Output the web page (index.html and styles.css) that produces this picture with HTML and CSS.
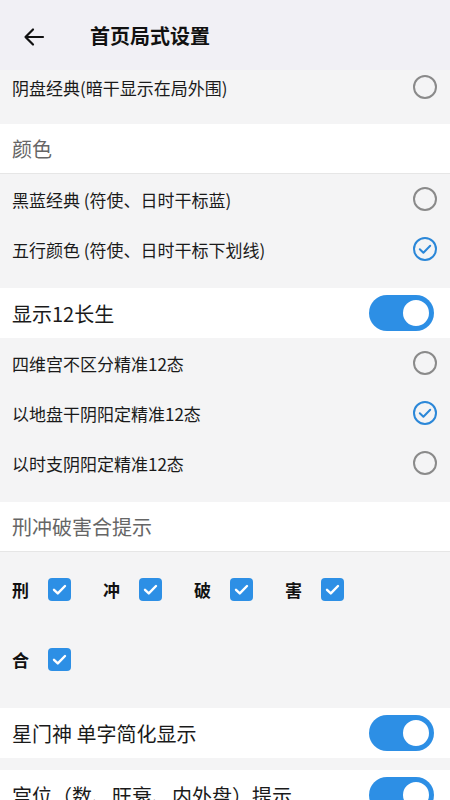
FILE: index.html
```html
<!DOCTYPE html>
<html lang="zh-CN">
<head>
    <meta charset="UTF-8">
    <meta name="viewport" content="width=device-width, initial-scale=1.0">
    <title>首页局式设置</title>
    <link rel="stylesheet" href="styles.css">
</head>
<body>
    <div class="header">
        <svg class="back" width="24" height="24" viewBox="0 0 24 24">
            <path d="M21 12H3.5M11 4.5L3.5 12L11 19.5" fill="none" stroke="#111" stroke-width="2.2" stroke-linecap="round" stroke-linejoin="round"/>
        </svg>
        <div class="title">首页局式设置</div>
    </div>

    <div class="group first">
        <div class="option">
            <span>阴盘经典(暗干显示在局外围)</span>
            <span class="radio"></span>
        </div>
    </div>

    <div class="section-title">颜色</div>
    <div class="group">
        <div class="option">
            <span>黑蓝经典 (符使、日时干标蓝)</span>
            <span class="radio"></span>
        </div>
        <div class="option">
            <span>五行颜色 (符使、日时干标下划线)</span>
            <span class="radio checked"><svg width="24" height="24" viewBox="0 0 24 24"><path d="M6.8 12.3L10.4 15.8L17.2 8.8" fill="none" stroke="#2b87d8" stroke-width="2" stroke-linecap="round" stroke-linejoin="round"/></svg></span>
        </div>
    </div>

    <div class="switch-row">
        <span>显示12长生</span>
        <span class="switch on"><span class="knob"></span></span>
    </div>
    <div class="group">
        <div class="option">
            <span>四维宫不区分精准12态</span>
            <span class="radio"></span>
        </div>
        <div class="option">
            <span>以地盘干阴阳定精准12态</span>
            <span class="radio checked"><svg width="24" height="24" viewBox="0 0 24 24"><path d="M6.8 12.3L10.4 15.8L17.2 8.8" fill="none" stroke="#2b87d8" stroke-width="2" stroke-linecap="round" stroke-linejoin="round"/></svg></span>
        </div>
        <div class="option">
            <span>以时支阴阳定精准12态</span>
            <span class="radio"></span>
        </div>
    </div>

    <div class="section-title">刑冲破害合提示</div>
    <div class="group checks">
        <div class="check-row">
            <div class="check-item"><span>刑</span><span class="box"><svg width="23" height="23" viewBox="0 0 23 23"><path d="M6 11.8L9.8 15.4L17 8" fill="none" stroke="#fff" stroke-width="2.4" stroke-linecap="round" stroke-linejoin="round"/></svg></span></div>
            <div class="check-item"><span>冲</span><span class="box"><svg width="23" height="23" viewBox="0 0 23 23"><path d="M6 11.8L9.8 15.4L17 8" fill="none" stroke="#fff" stroke-width="2.4" stroke-linecap="round" stroke-linejoin="round"/></svg></span></div>
            <div class="check-item"><span>破</span><span class="box"><svg width="23" height="23" viewBox="0 0 23 23"><path d="M6 11.8L9.8 15.4L17 8" fill="none" stroke="#fff" stroke-width="2.4" stroke-linecap="round" stroke-linejoin="round"/></svg></span></div>
            <div class="check-item"><span>害</span><span class="box"><svg width="23" height="23" viewBox="0 0 23 23"><path d="M6 11.8L9.8 15.4L17 8" fill="none" stroke="#fff" stroke-width="2.4" stroke-linecap="round" stroke-linejoin="round"/></svg></span></div>
        </div>
        <div class="check-row">
            <div class="check-item"><span>合</span><span class="box"><svg width="23" height="23" viewBox="0 0 23 23"><path d="M6 11.8L9.8 15.4L17 8" fill="none" stroke="#fff" stroke-width="2.4" stroke-linecap="round" stroke-linejoin="round"/></svg></span></div>
        </div>
    </div>

    <div class="switch-row">
        <span>星门神 单字简化显示</span>
        <span class="switch on"><span class="knob"></span></span>
    </div>
    <div class="spacer"></div>
    <div class="switch-row">
        <span>宫位（数、旺衰、内外盘）提示</span>
        <span class="switch on"><span class="knob"></span></span>
    </div>
</body>
</html>
```

FILE: styles.css
```css
body {
    margin: 0;
    padding: 0;
    background-color: #f4f4f5;
    color: #1a1a1a;
    font-family: "Noto Sans CJK SC", "Noto Sans", sans-serif;
    overflow: hidden;
}
.header {
    height: 70px;
    display: flex;
    align-items: center;
    background-color: #f1f0f5;
}
.header .back {
    margin-left: 22px;
    margin-top: 4px;
}
.title {
    margin-left: 44px;
    font-size: 20px;
    font-weight: bold;
    color: #111;
}
.group {
    background-color: #f4f4f5;
    padding-bottom: 14px;
}
.group.first {
    padding-bottom: 20px;
}
.group.first .option {
    height: 34px;
}
.option {
    height: 50px;
    display: flex;
    align-items: center;
    justify-content: space-between;
    padding: 0 13px 0 12px;
    font-size: 17px;
}
.radio {
    width: 20px;
    height: 20px;
    border: 2px solid #8a8a8a;
    border-radius: 50%;
    display: flex;
    align-items: center;
    justify-content: center;
}
.radio.checked {
    border-color: #2b87d8;
}
.radio svg {
    flex-shrink: 0;
}
.section-title {
    height: 49px;
    display: flex;
    align-items: center;
    padding-left: 12px;
    background-color: #fff;
    border-bottom: 1px solid #e6e6e6;
    font-size: 20px;
    color: #666;
}
.switch-row {
    height: 50px;
    display: flex;
    align-items: center;
    justify-content: space-between;
    padding: 0 16px 0 12px;
    background-color: #fff;
    font-size: 20px;
    color: #1a1a1a;
}
.switch {
    width: 65px;
    height: 36px;
    border-radius: 18px;
    background-color: #2d8fe5;
    display: flex;
    align-items: center;
    justify-content: flex-end;
    box-sizing: border-box;
    padding-right: 3px;
}
.knob {
    width: 26px;
    height: 26px;
    border-radius: 50%;
    background-color: #fff;
    border: 2px solid #2d8fe5;
    box-shadow: 0 0 0 1px #2d8fe5;
}
.checks {
    padding-top: 2px;
    padding-bottom: 14px;
}
.check-row {
    height: 70px;
    display: flex;
    align-items: center;
    padding-left: 12px;
}
.check-item {
    width: 91px;
    display: flex;
    align-items: center;
    font-size: 17px;
    font-weight: bold;
    color: #111;
}
.check-item .box {
    margin-left: 19px;
    width: 23px;
    height: 23px;
    border-radius: 4px;
    background-color: #2d8fe5;
    display: flex;
}
.spacer {
    height: 12px;
}
```
